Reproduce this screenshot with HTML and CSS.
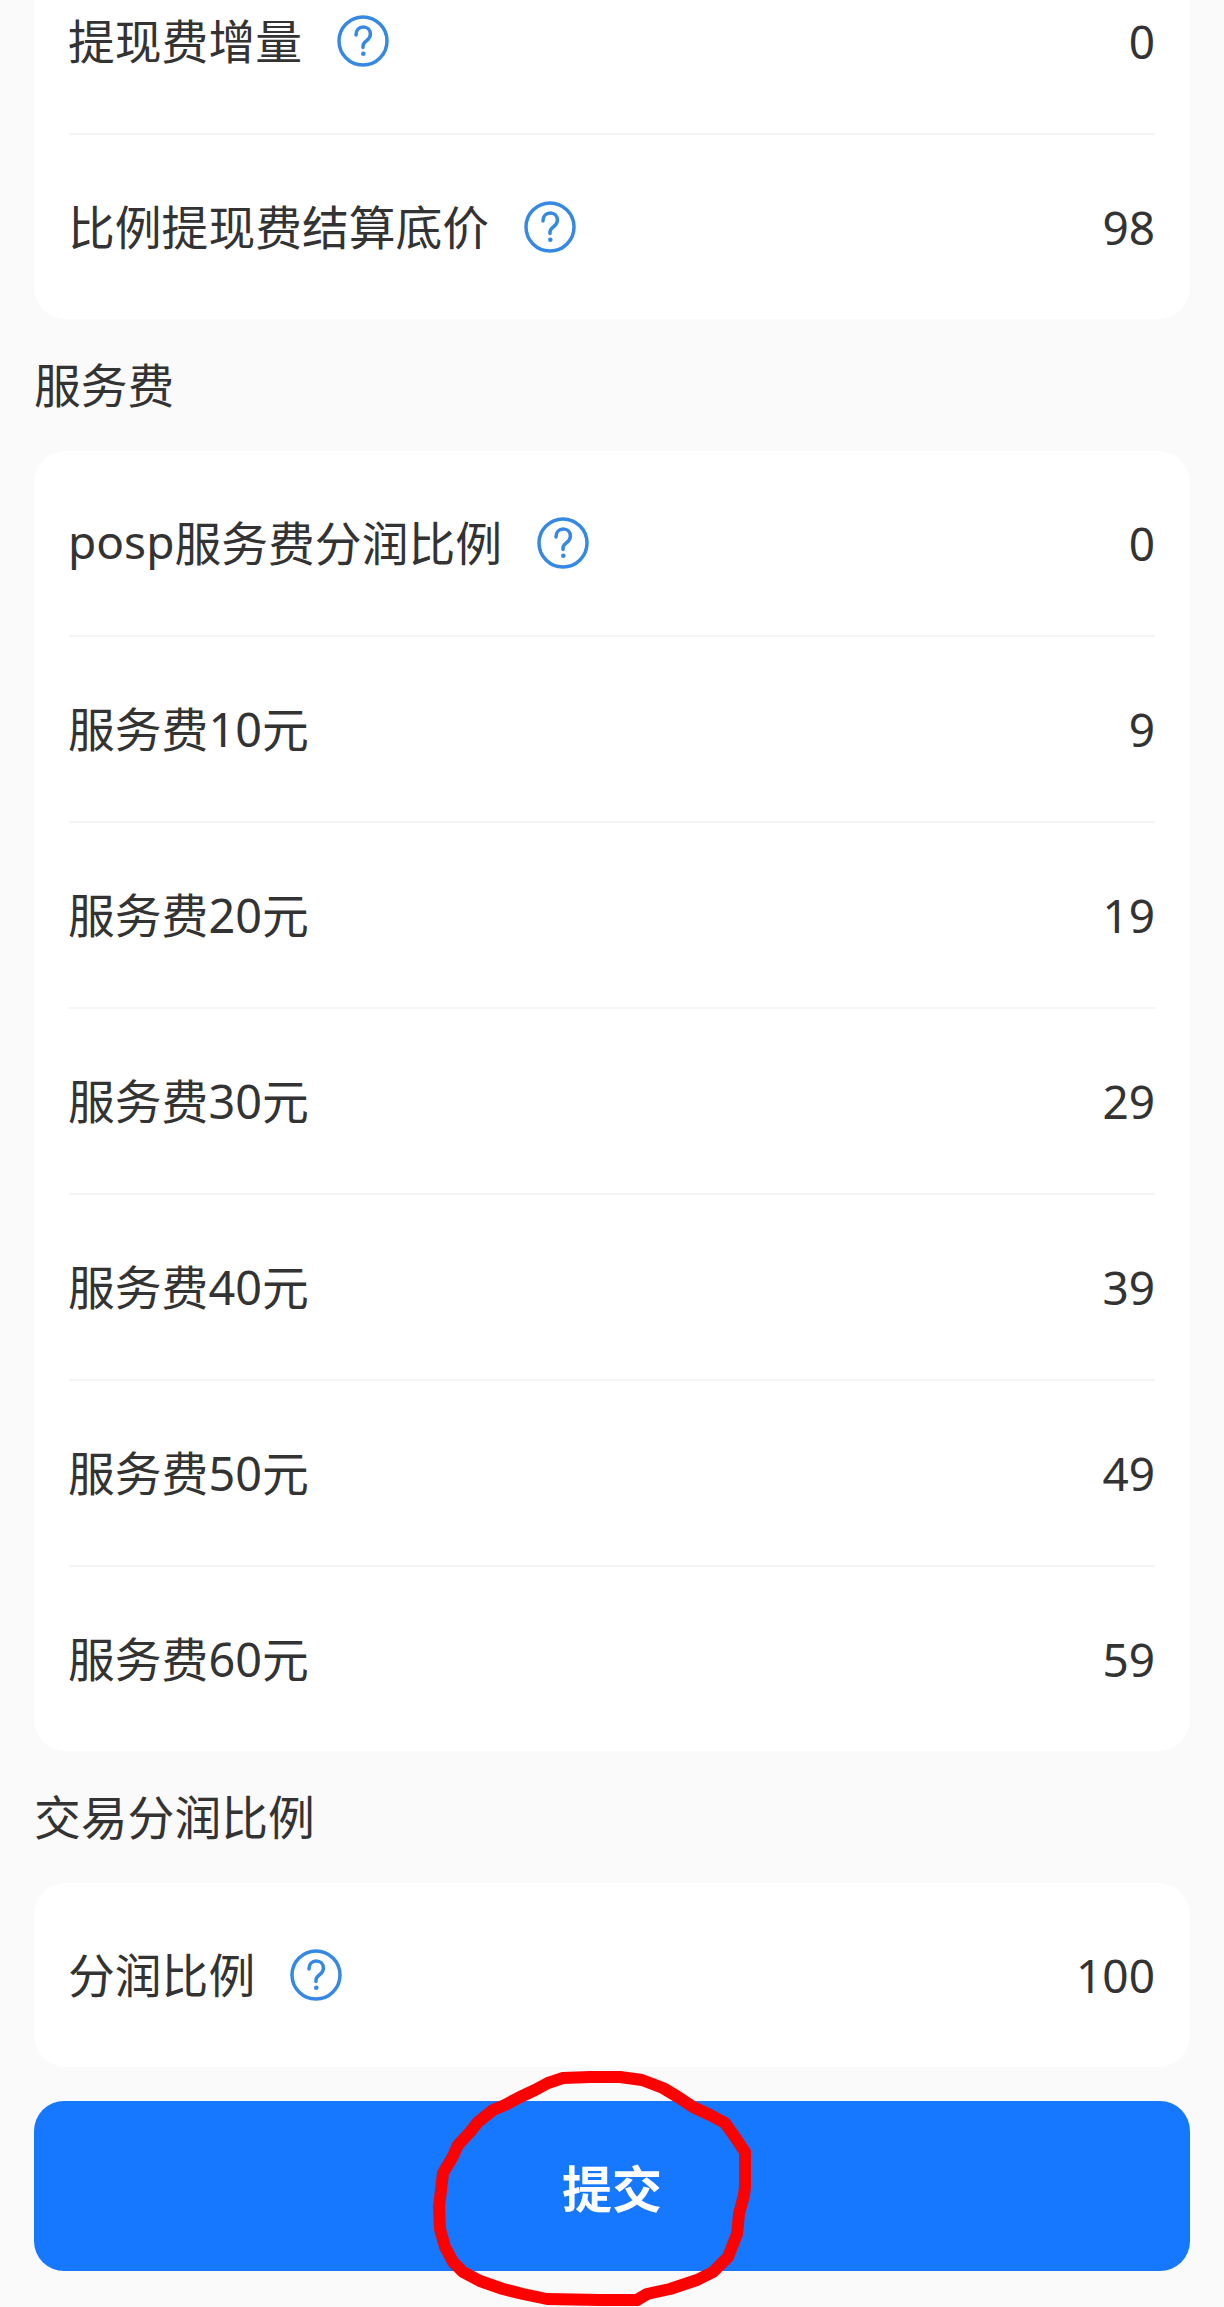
FILE: index.html
```html
<!DOCTYPE html>
<html lang="zh-CN">
<head>
<meta charset="utf-8">
<title>提交</title>
<link rel="stylesheet" href="styles.css">
</head>
<body>
<svg class="defs" width="0" height="0" aria-hidden="true">
  <symbol id="help" viewBox="0 0 52 52">
    <circle cx="26" cy="26" r="24" fill="none" stroke="#3589e5" stroke-width="3.500"/>
    <path d="M19 20c0-4.800 3-8 7.200-8s7.200 3 7.200 7.200c0 3.400-1.900 5-4 6.600-2.300 1.700-3.400 2.900-3.400 5.200v1.500" fill="none" stroke="#3589e5" stroke-width="3.500" stroke-linecap="round"/>
    <circle cx="26.300" cy="38.800" r="2.300" fill="#3589e5"/>
  </symbol>
</svg>
<main class="page">
  <section class="card card-first">
    <div class="row"><span class="label">提现费增量<svg class="help"><use href="#help"/></svg></span><span class="value">0</span></div>
    <div class="row"><span class="label">比例提现费结算底价<svg class="help"><use href="#help"/></svg></span><span class="value">98</span></div>
  </section>
  <h2 class="section-title">服务费</h2>
  <section class="card">
    <div class="row"><span class="label"><span class="latin">posp</span>服务费分润比例<svg class="help"><use href="#help"/></svg></span><span class="value">0</span></div>
    <div class="row"><span class="label">服务费10元</span><span class="value">9</span></div>
    <div class="row"><span class="label">服务费20元</span><span class="value">19</span></div>
    <div class="row"><span class="label">服务费30元</span><span class="value">29</span></div>
    <div class="row"><span class="label">服务费40元</span><span class="value">39</span></div>
    <div class="row"><span class="label">服务费50元</span><span class="value">49</span></div>
    <div class="row"><span class="label">服务费60元</span><span class="value">59</span></div>
  </section>
  <h2 class="section-title">交易分润比例</h2>
  <section class="card">
    <div class="row"><span class="label">分润比例<svg class="help"><use href="#help"/></svg></span><span class="value">100</span></div>
  </section>
  <button class="submit" type="button">提交</button>
</main>
<svg class="scribble" viewBox="412 2060 360 247" aria-hidden="true">
  <path d="M600 2077 L590 2077 L563 2078 L548 2083 L535 2090 L520 2097 L505 2105 L493 2110 L478 2122 L470 2132 L458 2145 L452 2158 L443 2173 L441 2190 L439 2207 L440 2229 L445 2247 L453 2262 L463 2272 L480 2281 L503 2289 L523 2294 L547 2299 L600 2300 L637 2300 L647 2294 L670 2289 L697 2280 L713 2272 L728 2257 L737 2234 L739 2214 L744 2195 L745 2187 L745 2152 L735 2137 L725 2123 L710 2115 L693 2107 L678 2097 L663 2088 L642 2080 L620 2077 Z" fill="none" stroke="#fe0000" stroke-width="12" stroke-linejoin="round"/>
</svg>
</body>
</html>
```
FILE: styles.css
```css
* { box-sizing: border-box; }
html, body { margin: 0; padding: 0; }
body {
  position: relative;
  width: 1224px;
  height: 2307px;
  overflow: hidden;
  background: #fafafa;
  color: #333;
  font-family: "Noto Sans", "Noto Sans CJK SC", sans-serif;
  font-size: 46px;
}
.defs { position: absolute; }
.page {
  display: flex;
  flex-direction: column;
  padding: 0 34px;
  margin-top: -51px;
}
.card {
  background: #fff;
  border-radius: 32px;
  padding: 0 35px;
}
.row {
  display: flex;
  align-items: center;
  justify-content: space-between;
  height: 186px;
  border-bottom: 2px solid #f5f5f5;
}
.row:last-child { height: 184px; border-bottom: 0; }
.label {
  display: inline-flex;
  align-items: center;
  padding-bottom: 4px;
  margin-left: -1px;
  font-size: 46.800px;
}
.latin { font-size: 46px; }
.help { width: 52px; height: 52px; margin: 3px 0 0 35px; }
.value { line-height: 1; }
.section-title {
  margin: 0;
  height: 132px;
  display: flex;
  align-items: center;
  padding-bottom: 5px;
  font-size: 46.800px;
  font-weight: 400;
}
.submit {
  margin-top: 34px;
  height: 170px;
  border: 0;
  border-radius: 30px;
  background: #1677ff;
  color: #fff;
  font: 700 50px "Noto Sans CJK SC", sans-serif;
}
.scribble {
  position: absolute;
  left: 412px;
  top: 2060px;
  width: 360px;
  height: 247px;
}
```
